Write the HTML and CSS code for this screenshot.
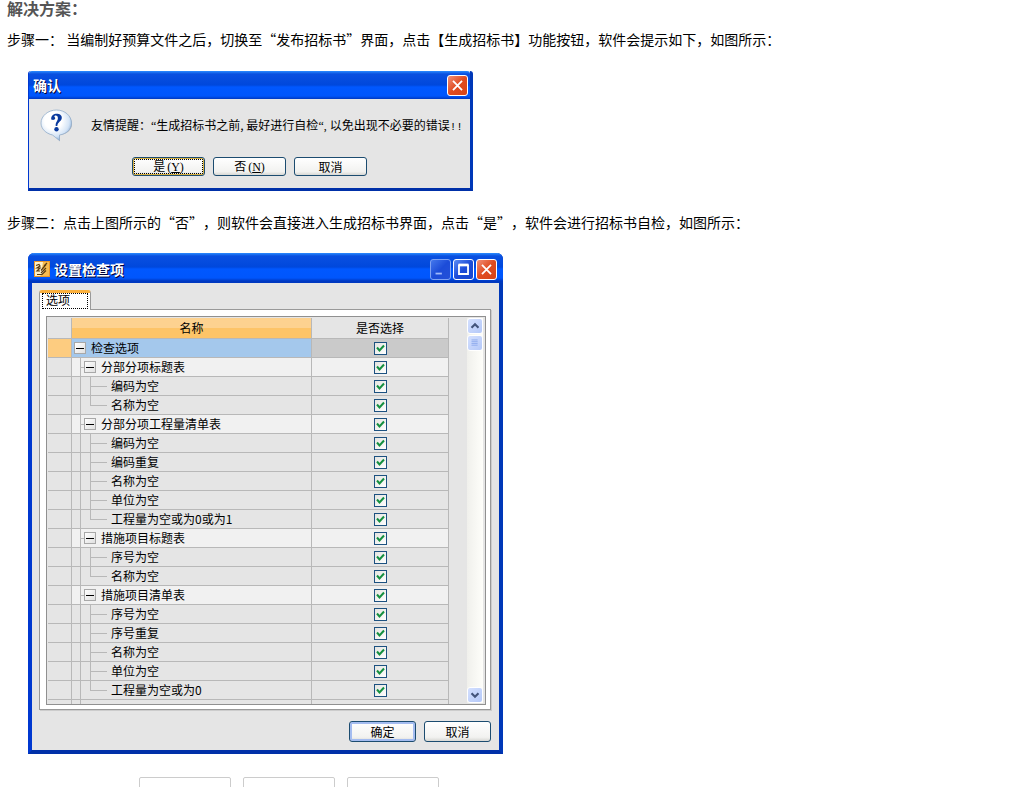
FILE: index.html
```html
<!DOCTYPE html>
<html lang="zh-CN">
<head>
<meta charset="utf-8">
<title>解决方案</title>
<link rel="stylesheet" href="styles.css">
</head>
<body>
<main class="article">
  <h2 class="heading">解决方案：</h2>
  <p class="step">步骤一： 当编制好预算文件之后，切换至“发布招标书”界面，点击【生成招标书】功能按钮，软件会提示如下，如图所示：</p>

  <section class="window confirm" aria-label="确认">
    <header class="titlebar">
      <span class="title">确认</span>
      <button class="caption close" aria-label="关闭"><svg viewBox="0 0 21 21"><path d="M5.500 5.500l10 10M15.500 5.500l-10 10"/></svg></button>
    </header>
    <div class="confirm-body">
      <div class="message">
        <svg class="question" viewBox="0 0 34 34" aria-hidden="true">
          <defs><radialGradient id="bubble" cx=".4" cy=".35" r=".7"><stop offset=".4" stop-color="#fff"/><stop offset=".75" stop-color="#d4e4f6"/><stop offset="1" stop-color="#7aa4d4"/></radialGradient></defs>
          <path d="M17 2C8 2 2 8 2 15c0 6 5 10 12 11.500L20 32.500V26c7-1 12-5 12-11C32 8 26 2 17 2z" fill="#8a9098" opacity=".6"/>
          <path d="M16.500 1C8 1 1 7 1 14c0 6 5 10.500 11.500 12L19.500 31.500V26c7-1 12-5.500 12-12C31.500 7 25 1 16.500 1z" fill="url(#bubble)" stroke="#94aecb" stroke-width=".8"/>
          <path d="M11.200 10.500C10.500 3 22.300 3.500 21.800 9c-.3 3.500-4.300 4-4.500 8h-1.600c-.4-4 2.300-5 2.200-8 0-3-3.400-3.200-3.600-1.300 2 1.300.6 4.300-3.100 2.800z" fill="#0a3a9e"/>
          <circle cx="16.500" cy="20.300" r="2.200" fill="#0a3a9e"/>
        </svg>
        <p class="text">友情提醒：<span class="half">“</span>生成招标书之前, 最好进行自检<span class="half">“, </span>以免出现不必要的错误<span class="marks">!!</span></p>
      </div>
      <div class="answers">
        <button class="button focused">是<span class="key">(<u>Y</u>)</span></button>
        <button class="button">否<span class="key">(<u>N</u>)</span></button>
        <button class="button">取消</button>
      </div>
    </div>
  </section>

  <p class="step second">步骤二：点击上图所示的“否”，则软件会直接进入生成招标书界面，点击“是”，软件会进行招标书自检，如图所示：</p>

  <section class="window settings" aria-label="设置检查项">
    <header class="titlebar">
      <svg class="app" viewBox="0 0 16 16" aria-hidden="true"><path d="M0 0h16v16H0z" fill="#e8952a"/><path d="M1 1h14v14H1z" fill="#fff0c8"/><path d="M9 1h6v14H6l4-4-2-4z" fill="#f7bc50"/><path d="M2 4.500l3-1 1 1.500-3 2h3l-3 3 3 0M3 13.500h5l4-4M7 9.500l5-6M7 12l5-5M13 2l-3 3" stroke="#5a3a10" stroke-width="1.200" fill="none"/></svg>
      <span class="title">设置检查项</span>
      <button class="caption dim" aria-label="最小化"><svg viewBox="0 0 21 21"><path d="M5 15h7"/></svg></button>
      <button class="caption" aria-label="最大化"><svg viewBox="0 0 21 21"><path d="M5 5.500h11" stroke-width="3"/><path d="M5.500 5v10.500h10V5"/></svg></button>
      <button class="caption close" aria-label="关闭"><svg viewBox="0 0 21 21"><path d="M5.500 5.500l10 10M15.500 5.500l-10 10"/></svg></button>
    </header>
    <div class="settings-body">
      <div class="tabs" role="tablist"><button class="tab" role="tab" aria-selected="true"><span class="tab-focus">选项</span></button></div>
      <div class="panel">
        <div class="grid">
          <table class="tree">
            <colgroup><col class="c-mark"><col class="c-name"><col class="c-pick"><col></colgroup>
            <thead><tr><th></th><th class="h-name">名称</th><th>是否选择</th><th class="rest"></th></tr></thead>
            <tbody id="rows"></tbody>
          </table>
          <div class="scroll" aria-hidden="true">
            <svg class="knob" viewBox="0 0 16 16"><path d="M4 10l4-4 4 4" class="arrow"/></svg>
            <svg class="knob" viewBox="0 0 16 16"><path d="M4 4.500h7M4 6.500h7M4 8.500h7M4 10.500h7" class="grip"/></svg>
            <svg class="knob last" viewBox="0 0 16 16"><path d="M4 6l4 4 4-4" class="arrow"/></svg>
          </div>
        </div>
      </div>
      <div class="actions">
        <button class="button default">确定</button>
        <button class="button">取消</button>
      </div>
    </div>
  </section>

  <div class="boxes"><div class="box"></div><div class="box"></div><div class="box"></div></div>
</main>
<script src="rows.js"></script>
</body>
</html>
```
FILE: styles.css
```css
* { box-sizing: border-box; }
html, body { height: 100%; }
body {
  margin: 0;
  overflow: hidden;
  background: #fff;
  color: #000;
  font: 14px/28px "Noto Sans CJK SC", sans-serif;
  text-spacing-trim: space-all;
}
button { font: inherit; color: inherit; margin: 0; padding: 0; }
.article { padding: 0 7px; }
.heading { margin: 0; font-size: 16px; line-height: 16px; color: #555; font-weight: bold; }
.step { margin: 9px 0 18px; line-height: 28px; }
.step.second { margin-top: 17px; margin-bottom: 17px; }

.window {
  margin-left: 21px;
  max-width: 100%;
  font-size: 12px;
  line-height: 18px;
  background: #e5e5e5;
  border: 3px solid #0842c8;
  border-top: 0;
  border-color: #0842c8 #0038b8 #0030a8 #0038d0;
  border-radius: 6px 6px 0 0;
}
.confirm { width: 445px; border-left-width: 1px; border-radius: 3px 3px 0 0; }
.settings { width: 475px; border-width: 0 4px 4px; }
.titlebar {
  display: flex;
  align-items: center;
  gap: 2px;
  height: 28px;
  padding: 0 2px 0 4px;
  color: #fff;
  font-weight: bold;
  background: linear-gradient(#2a8cff 0, #0a50e0 3px, #0048dc 14px, #0058ff 16px, #0056fc 25px, #0038c0 28px);
  border-radius: 3px 3px 0 0;
}
.settings .titlebar {
  height: 30px;
  margin: 0 -4px;
  padding: 2px 6px 0 6px;
  border-radius: 6px 6px 0 0;
}
.title { flex: 1; font-size: 14px; text-shadow: 1px 1px 0 #003; }
.app { width: 16px; height: 16px; margin-right: 2px; }
.caption {
  width: 21px;
  height: 21px;
  border: 1px solid #fff;
  border-radius: 3px;
  background: linear-gradient(135deg, #5c8cf4, #1c4cd8 50%, #1846cc);
}
.caption svg { display: block; width: 19px; height: 19px; fill: none; stroke: #fff; stroke-width: 2; }
.caption.close { background: linear-gradient(135deg, #f09078, #e04c20 50%, #d84418); }
.caption.dim { border-color: #7fa2f4; background: linear-gradient(135deg, #4478ec, #1c4cd8 50%, #2450d8); }
.caption.dim svg { stroke: #9fb8fa; }

.confirm-body { padding: 10px 6px 12px 11px; }
.message { display: flex; align-items: center; gap: 17px; }
.question { flex: none; width: 34px; height: 34px; }
.text { margin: 0; white-space: nowrap; }
.half { font-family: "Liberation Serif", serif; }
.marks { font: 11px/18px "Liberation Mono", monospace; }
.answers { display: flex; gap: 8px; padding: 14px 0 0 92px; }
.button {
  width: 73px;
  height: 19px;
  line-height: 15px;
  border: 1px solid #1c4c70;
  border-radius: 3px;
  background: linear-gradient(#fff, #f2f2f0 80%, #d8d8d4);
}
.button.focused { box-shadow: inset 0 0 0 1px #d8b040; outline: 1px dotted #000; outline-offset: -3px; }
.key { margin-left: 2px; font-family: "Liberation Serif", serif; }

.settings-body { padding: 7px 8px 8px 7px; }
.tab {
  display: block;
  position: relative;
  width: 52px;
  height: 20px;
  margin-bottom: -1px;
  padding: 0 2px 1px;
  text-align: left;
  background: #fff;
  border: 1px solid #999;
  border-top: 3px solid #fbb03c;
  border-bottom: 0;
  border-radius: 3px 3px 0 0;
}
.tab-focus { display: block; height: 16px; padding-left: 3px; line-height: 12px; border: 1px dotted #000; }
.panel { background: #fff; border: 1px solid #999; padding: 6px 4px 4px 6px; box-shadow: 1px 1px 0 #ccc; }
.grid { display: flex; height: 389px; padding: 1px; overflow: hidden; border: 1px solid #909090; background: #e5e5e5; }
.tree { flex: 1; table-layout: fixed; width: 0; border-spacing: 0; align-self: flex-start; }
.c-mark { width: 24px; }
.c-name { width: 240px; }
.c-pick { width: 137px; }
.tree th, .tree td { height: 19px; padding: 0; border: solid #b8b8b8; border-width: 0 1px 1px 0; }
.tree th { height: 21px; font-weight: normal; }
.tree .h-name { background: linear-gradient(#fdd290 50%, #fdc468 50%); }
.tree .rest { border: 0; }
.name { display: flex; align-items: center; height: 18px; white-space: nowrap; }
.root .mark { background: #fdcc80; }
.root .label { background: #a4c8ec; }
.root .pick { background: #cacaca; }
.group .label, .group .pick { background: #f1f1f1; }
.root .name { padding-left: 2px; }
.rail { width: 9px; height: 18px; border-right: 1px solid #b8b8b8; }
.stub { width: 3px; height: 1px; background: #b8b8b8; }
.toggle { width: 12px; height: 12px; margin-right: 5px; border: 1px solid #a8a8a8; background: linear-gradient(135deg, #fff, #e0e0e0); }
.toggle svg { display: block; width: 10px; height: 10px; stroke: #000; }
.elbow { width: 17px; height: 18px; margin: 0 4px 0 9px; background: linear-gradient(#b8b8b8, #b8b8b8) 0 9px / 17px 1px no-repeat, linear-gradient(#b8b8b8, #b8b8b8) 0 0 / 1px 18px no-repeat; }
.end .elbow { background-size: 17px 1px, 1px 9px; }
.pick { text-align: center; }
.check {
  appearance: none;
  display: block;
  width: 13px;
  height: 13px;
  margin: 0 auto;
  border: 1px solid #1c5180;
  background: linear-gradient(135deg, #e4e4e0, #fff);
}
.pick-box { display: grid; place-items: center; }
.pick-box > * { grid-area: 1 / 1; }
.pick-box svg { width: 13px; height: 13px; fill: none; stroke: #159040; stroke-width: 2; pointer-events: none; z-index: 1; }
.scroll { display: flex; flex-direction: column; gap: 1px; width: 16px; margin-right: 1px; background: linear-gradient(90deg, #f0f0ec, #fefefa); }
.knob { width: 16px; height: 16px; border: 1px solid #fff; border-radius: 3px; background: linear-gradient(135deg, #d4e0ff, #b4c8f8); fill: none; }
.last { margin-top: auto; }
.arrow { stroke: #44557c; stroke-width: 2.500; }
.grip { stroke: #8ca8ec; }
.actions { display: flex; justify-content: flex-end; gap: 8px; padding-top: 11px; }
.actions .button { width: 67px; height: 21px; line-height: 17px; }
.default { box-shadow: inset 0 0 0 2px #a4bcf0; }

.boxes { display: flex; gap: 12px; margin: 23px 0 0 132px; }
.box { width: 92px; height: 32px; border: 1px solid #ccc; border-radius: 2px; }
```
FILE: rows.js
```js
const rows = [
  [0, '检查选项'],
  [1, '分部分项标题表'], [2, '编码为空'], [2, '名称为空'],
  [1, '分部分项工程量清单表'], [2, '编码为空'], [2, '编码重复'], [2, '名称为空'], [2, '单位为空'], [2, '工程量为空或为0或为1'],
  [1, '措施项目标题表'], [2, '序号为空'], [2, '名称为空'],
  [1, '措施项目清单表'], [2, '序号为空'], [2, '序号重复'], [2, '名称为空'], [2, '单位为空'], [2, '工程量为空或为0']
];
const kinds = ['root', 'group', 'leaf'];
const toggle = '<span class="toggle"><svg viewBox="0 0 10 10"><path d="M1 5.500h8"/></svg></span>';
const lead = [toggle, '<span class="rail"></span><span class="stub"></span>' + toggle, '<span class="rail"></span><span class="elbow"></span>'];
document.getElementById('rows').innerHTML = rows.map(([level, name], i) => {
  const end = level === 2 && (!rows[i + 1] || rows[i + 1][0] < 2) ? ' end' : '';
  return `<tr class="${kinds[level]}${end}"><td class="mark"></td>
    <td class="label"><div class="name">${lead[level]}<label for="c${i}">${name}</label></div></td>
    <td class="pick"><div class="pick-box"><input class="check" type="checkbox" id="c${i}" checked><svg viewBox="0 0 13 13"><path d="M3 5.500l2.500 3 4.500-5"/></svg></div></td>
    <td class="rest"></td></tr>`;
}).join('') + '<tr><td></td><td><div class="name"><span class="rail"></span></div></td><td></td><td class="rest"></td></tr>';
```
